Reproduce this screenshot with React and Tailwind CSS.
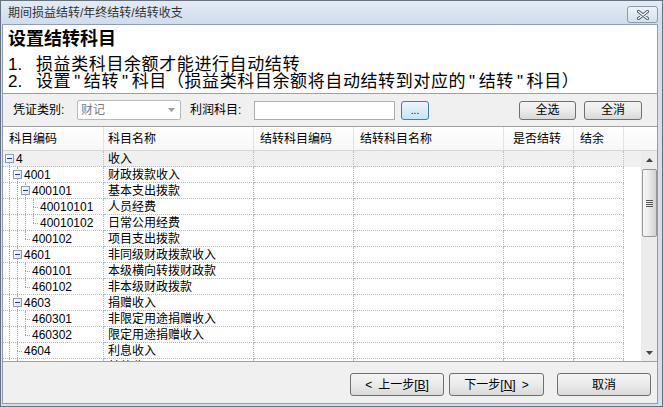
import React from "react";

const rows = [
    { code: "4", name: "收入", level: 0, box: true },
    { code: "4001", name: "财政拨款收入", level: 1, box: true },
    { code: "400101", name: "基本支出拨款", level: 2, box: true },
    { code: "40010101", name: "人员经费", level: 3 },
    { code: "40010102", name: "日常公用经费", level: 3 },
    { code: "400102", name: "项目支出拨款", level: 2 },
    { code: "4601", name: "非同级财政拨款收入", level: 1, box: true },
    { code: "460101", name: "本级横向转拨财政款", level: 2 },
    { code: "460102", name: "非本级财政拨款", level: 2 },
    { code: "4603", name: "捐赠收入", level: 1, box: true },
    { code: "460301", name: "非限定用途捐赠收入", level: 2 },
    { code: "460302", name: "限定用途捐赠收入", level: 2 },
    { code: "4604", name: "利息收入", level: 1 },
    { code: "4609", name: "其他收入", level: 1 },
];

// does the branch at level k keep going below row i
const contAt = (i, k) => {
    for (let j = i + 1; j < rows.length; j++) {
        if (rows[j].level < k) return false;
        if (rows[j].level === k) return true;
    }
    return true;
};

const TreeCell = ({ row, i }) => {
    const L = row.level;
    return (
        <div className="flex items-center pl-[2px]">
            {Array.from({ length: L + 1 }).map((_, k) => (
                <span key={k} className="relative w-[8px] shrink-0 self-stretch">
                    {k < L && contAt(i, k) && (
                        <span className="absolute left-[4px] top-0 h-full border-l border-dotted border-[#a0a0a0]" />
                    )}
                    {k === L && (
                        <>
                            {i > 0 && <span className="absolute left-[4px] top-0 h-1/2 border-l border-dotted border-[#a0a0a0]" />}
                            {contAt(i, L) && <span className="absolute left-[4px] top-1/2 h-1/2 border-l border-dotted border-[#a0a0a0]" />}
                            <span className="absolute left-[4px] top-1/2 w-[5px] border-t border-dotted border-[#a0a0a0]" />
                            {row.box && (
                                <span className="absolute left-0 top-[3px] flex h-[9px] w-[9px] items-center justify-center border border-[#8aa0b8] bg-linear-to-br from-white to-[#dfe6ee]">
                                    <span className="h-[1px] w-[5px] bg-[#1d3d8f]" />
                                </span>
                            )}
                        </>
                    )}
                </span>
            ))}
            <span className="ml-[3px]">{row.code}</span>
        </div>
    );
};

const widths = ["w-[101px]", "w-[150px]", "w-[100px]", "w-[150px]", "w-[70px]", "w-[50px]"];
const heads = ["科目编码", "科目名称", "结转科目编码", "结转科目名称", "是否结转", "结余"];
const headPad = ["pl-[6px]", "pl-[4px]", "pl-[6px]", "pl-[6px]", "pl-[9px]", "pl-[6px]"];

const Btn = ({ className, children }) => (
    <button
        type="button"
        className={`flex items-center justify-center rounded-[3px] border border-[#707070] bg-linear-to-b from-[#f4f4f4] via-[#ebebeb] to-[#d9d9d9] text-[12px] text-black ${className}`}
    >
        {children}
    </button>
);

const Q = () => <span className="mx-[3px]">"</span>;

export default function App() {
    return (
        <div className="flex h-[407px] w-[663px] flex-col border border-[#66727f] bg-[#d3dfee] font-['Liberation_Sans','Noto_Sans_CJK_SC',sans-serif] text-black">
            {/* title bar */}
            <div className="flex h-[23px] items-center justify-between bg-linear-to-b from-[#e3ebf5] to-[#d0dcec] pl-[7px] pr-[4px]">
                <span className="mt-[1px] text-[12px] text-[#333]">期间损益结转/年终结转/结转收支</span>
                <button
                    type="button"
                    className="mt-[4px] flex h-[17px] w-[31px] items-center justify-center rounded-[3px] border border-[#8d9aaa] bg-linear-to-b from-[#eef3f9] to-[#d5e0ed]"
                >
                    <svg width="12" height="10" viewBox="0 0 12 10">
                        <path d="M1.5 1.5 L10.5 8.5 M10.5 1.5 L1.5 8.5" stroke="#4d5966" strokeWidth="3.2" strokeLinecap="round" />
                        <path d="M1.5 1.5 L10.5 8.5 M10.5 1.5 L1.5 8.5" stroke="#ffffff" strokeWidth="1.4" strokeLinecap="round" />
                    </svg>
                </button>
            </div>

            {/* dialog body */}
            <div className="ml-[1px] flex h-[380px] w-[656px] flex-col border border-[#8e9db0] bg-[#f0f0f0]">
                <div className="h-[69px] border-b border-[#a0a0a0] bg-white pl-[5px] pt-[3px]">
                    <div className="h-[22px] text-[18px] font-bold leading-[22px]">设置结转科目</div>
                    <div className="mt-[6px] flex h-[17px] text-[17px] leading-[17px]">
                        <span className="w-[28px]">1.</span>
                        <span className="tracking-[0.6px]">损益类科目余额才能进行自动结转</span>
                    </div>
                    <div className="flex h-[17px] text-[17px] leading-[17px]">
                        <span className="w-[28px]">2.</span>
                        <span className="tracking-[0.6px]">
                            设置<Q />结转<Q />科目（损益类科目余额将自动结转到对应的<Q />结转<Q />科目）
                        </span>
                    </div>
                </div>

                {/* toolbar */}
                <div className="flex h-[32px] items-center pl-[10px] pr-[15px] text-[12px]">
                    <span className="w-[64px]">凭证类别:</span>
                    <div className="flex h-[20px] w-[104px] items-center justify-between rounded-[2px] border border-[#b9b9b9] bg-white pl-[3px] pr-[5px] text-[#7a7a7a]">
                        <span>财记</span>
                        <svg width="7" height="4" viewBox="0 0 7 4">
                            <path d="M0 0 H7 L3.5 4 Z" fill="#9a9a9a" />
                        </svg>
                    </div>
                    <span className="ml-[9px] w-[64px]">利润科目:</span>
                    <div className="h-[19px] w-[141px] border border-[#abadb3] bg-white" />
                    <button
                        type="button"
                        className="ml-[6px] flex h-[19px] w-[28px] items-end justify-center rounded-[3px] border border-[#3c7fb1] bg-linear-to-b from-[#eaf6fd] to-[#c4e5f6] pb-[3px] text-[10px] leading-[10px]"
                    >
                        ...
                    </button>
                    <div className="ml-auto flex gap-[8px]">
                        <Btn className="h-[19px] w-[57px]">全选</Btn>
                        <Btn className="h-[19px] w-[58px]">全消</Btn>
                    </div>
                </div>

                {/* grid */}
                <div className="border-y border-[#a0a0a0] bg-white text-[12px]">
                    <div className="flex h-[24px] border-b border-[#d5d5d5] bg-linear-to-b from-white to-[#f7f7f7]">
                        {heads.map((h, i) => (
                            <div key={h} className={`${widths[i]} ${headPad[i]} flex items-center border-r border-[#e3e3e3]`}>
                                {h}
                            </div>
                        ))}
                        <div className="flex-1" />
                    </div>
                    <div className="flex h-[210px]">
                        <div className="flex-1 overflow-hidden">
                            {rows.map((row, i) => (
                                <div key={row.code} className={`flex h-[16px] ${i === 0 ? "bg-[#f0f0f0]" : ""}`}>
                                    {widths.map((w, c) => (
                                        <div
                                            key={c}
                                            className={`${w} flex border-r border-b border-dotted border-[#9cc3e6] ${c === 1 ? "items-center pl-[4px]" : ""}`}
                                        >
                                            {c === 0 && <TreeCell row={row} i={i} />}
                                            {c === 1 && row.name}
                                        </div>
                                    ))}
                                    <div className="flex-1" />
                                </div>
                            ))}
                        </div>
                        {/* scrollbar */}
                        <div className="flex w-[16px] flex-col bg-[#ececec]">
                            <div className="flex h-[17px] items-center justify-center">
                                <svg width="7" height="4" viewBox="0 0 7 4">
                                    <path d="M0 4 H7 L3.5 0 Z" fill="#444" />
                                </svg>
                            </div>
                            <div className="ml-[1px] mt-[1px] flex h-[68px] w-[15px] items-center justify-center rounded-[2px] border border-[#979797] bg-linear-to-r from-[#f7f7f7] via-[#e9e9e9] to-[#d2d2d2]">
                                <div className="flex flex-col gap-[1px]">
                                    <span className="h-[1px] w-[7px] bg-[#555]" />
                                    <span className="h-[1px] w-[7px] bg-[#555]" />
                                    <span className="h-[1px] w-[7px] bg-[#555]" />
                                    <span className="h-[1px] w-[7px] bg-[#555]" />
                                </div>
                            </div>
                            <div className="flex-1" />
                            <div className="flex h-[17px] items-center justify-center">
                                <svg width="7" height="4" viewBox="0 0 7 4">
                                    <path d="M0 0 H7 L3.5 4 Z" fill="#444" />
                                </svg>
                            </div>
                        </div>
                    </div>
                </div>

                {/* footer */}
                <div className="flex flex-1 items-start justify-end pr-[6px] pt-[11px]">
                    <Btn className="h-[23px] w-[94px] gap-[6px]">
                        <span>&lt;</span>
                        <span>
                            上一步[<span className="underline">B</span>]
                        </span>
                    </Btn>
                    <Btn className="ml-[5px] h-[23px] w-[95px] gap-[6px]">
                        <span>
                            下一步[<span className="underline">N</span>]
                        </span>
                        <span>&gt;</span>
                    </Btn>
                    <Btn className="ml-[13px] h-[23px] w-[94px]">取消</Btn>
                </div>
            </div>
        </div>
    );
}
